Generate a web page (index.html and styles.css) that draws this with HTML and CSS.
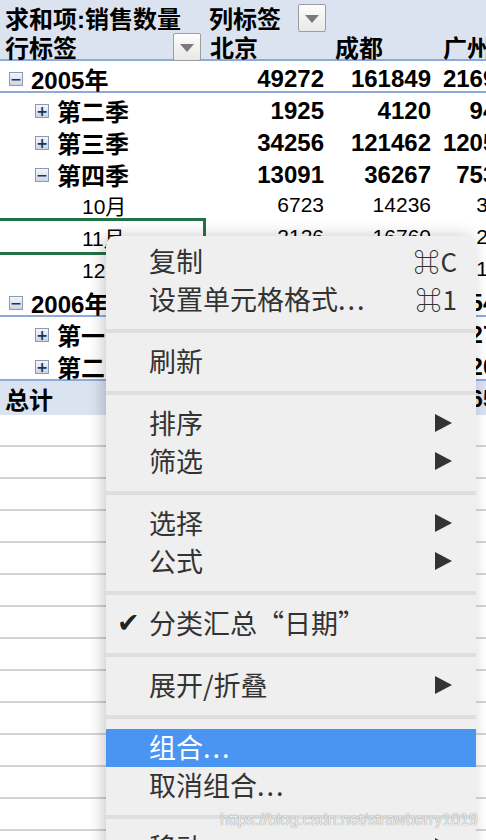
FILE: index.html
```html
<!DOCTYPE html>
<html lang="zh">
<head>
    <meta charset="utf-8">
    <title>数据透视表</title>
    <link rel="stylesheet" href="styles.css">
</head>
<body>
<div class="sheet">
    <div class="row head top">
        <div class="cell label">求和项:销售数量</div>
        <div class="cell pick">列标签 <span class="drop"></span></div>
    </div>
    <div class="row head line">
        <div class="cell pick">行标签 <span class="drop"></span></div>
        <div class="cell city">北京</div>
        <div class="cell city">成都</div>
        <div class="cell city">广州</div>
    </div>

    <div class="row bold line">
        <div class="cell lv1"><span class="tog">−</span>2005年</div>
        <div class="cell num">49272</div>
        <div class="cell num">161849</div>
        <div class="cell num">216935</div>
    </div>
    <div class="row bold">
        <div class="cell lv2"><span class="tog">+</span>第二季</div>
        <div class="cell num">1925</div>
        <div class="cell num">4120</div>
        <div class="cell num">9487</div>
    </div>
    <div class="row bold">
        <div class="cell lv2"><span class="tog">+</span>第三季</div>
        <div class="cell num">34256</div>
        <div class="cell num">121462</div>
        <div class="cell num">120563</div>
    </div>
    <div class="row bold">
        <div class="cell lv2"><span class="tog">−</span>第四季</div>
        <div class="cell num">13091</div>
        <div class="cell num">36267</div>
        <div class="cell num">75342</div>
    </div>
    <div class="row">
        <div class="cell lv3">10月</div>
        <div class="cell num">6723</div>
        <div class="cell num">14236</div>
        <div class="cell num">3120</div>
    </div>
    <div class="row">
        <div class="cell lv3 sel">11月</div>
        <div class="cell num">2126</div>
        <div class="cell num">16760</div>
        <div class="cell num">2841</div>
    </div>
    <div class="row">
        <div class="cell lv3">12月</div>
        <div class="cell num">4242</div>
        <div class="cell num">5271</div>
        <div class="cell num">1502</div>
    </div>
    <div class="row bold line">
        <div class="cell lv1"><span class="tog">−</span>2006年</div>
        <div class="cell num">31450</div>
        <div class="cell num">98311</div>
        <div class="cell num">5427</div>
    </div>
    <div class="row bold">
        <div class="cell lv2"><span class="tog">+</span>第一季</div>
        <div class="cell num">16204</div>
        <div class="cell num">50127</div>
        <div class="cell num">2715</div>
    </div>
    <div class="row bold line">
        <div class="cell lv2"><span class="tog">+</span>第二季</div>
        <div class="cell num">15246</div>
        <div class="cell num">48184</div>
        <div class="cell num">2012</div>
    </div>
    <div class="row head total">
        <div class="cell label">总计</div>
        <div class="cell num">80722</div>
        <div class="cell num">260160</div>
        <div class="cell num">6538</div>
    </div>

    <div class="row empty"></div>
    <div class="row empty"></div>
    <div class="row empty"></div>
    <div class="row empty"></div>
    <div class="row empty"></div>
    <div class="row empty"></div>
    <div class="row empty"></div>
    <div class="row empty"></div>
    <div class="row empty"></div>
    <div class="row empty"></div>
    <div class="row empty"></div>
    <div class="row empty"></div>
    <div class="row empty"></div>
</div>

<div class="menu">
    <div class="item">复制 <span class="key">⌘C</span></div>
    <div class="item">设置单元格格式<span class="dots">...</span> <span class="key">⌘1</span></div>
    <div class="sep"></div>
    <div class="item">刷新</div>
    <div class="sep"></div>
    <div class="item">排序 <span class="arrow"></span></div>
    <div class="item">筛选 <span class="arrow"></span></div>
    <div class="sep"></div>
    <div class="item">选择 <span class="arrow"></span></div>
    <div class="item">公式 <span class="arrow"></span></div>
    <div class="sep"></div>
    <div class="item"><span class="check">✔</span>分类汇总“日期”</div>
    <div class="sep"></div>
    <div class="item">展开/折叠 <span class="arrow"></span></div>
    <div class="sep"></div>
    <div class="item active">组合<span class="dots">...</span></div>
    <div class="item">取消组合<span class="dots">...</span></div>
    <div class="sep"></div>
    <div class="item">移动 <span class="arrow"></span></div>
</div>

<div class="mark">https://blog.csdn.net/strawberry1019</div>
</body>
</html>
```

FILE: styles.css
```css
html, body {
    margin: 0;
    height: 840px;
    overflow: hidden;
}

body {
    position: relative;
    background: white;
    font-family: "Liberation Sans", "Noto Sans CJK SC", sans-serif;
    color: black;
}

.sheet {
    width: 529px;
}

.row {
    display: grid;
    grid-template-columns: 205px 125px 107px 92px;
    height: 32px;
    box-sizing: border-box;
    align-items: center;
    font-size: 21px;
}

.row.top {
    height: 29px;
}

.head {
    background: #dbe3f1;
    font-weight: bold;
    font-size: 24px;
}

.bold {
    font-weight: bold;
    font-size: 24px;
}

.line {
    border-bottom: 2px solid #8eaadb;
}

.empty {
    border-bottom: 2px solid #d4d4d4;
}

.cell {
    white-space: nowrap;
    display: flex;
    align-items: center;
}

.label {
    padding-left: 5px;
}

.pick {
    justify-content: space-between;
    padding: 0 4px 0 5px;
}

.head .label + .pick {
    padding-left: 4px;
}

.city {
    padding-left: 5px;
}

.city:last-child {
    padding-left: 6px;
}

.num {
    justify-content: flex-end;
    padding-right: 6px;
}

.drop {
    width: 26px;
    height: 26px;
    border: 1px solid #9d9d9d;
    border-radius: 2px;
    background: linear-gradient(#fdfdfd, #e8e8e8);
    position: relative;
}

.drop::after {
    content: "";
    position: absolute;
    left: 6px;
    top: 10px;
    border-top: 8px solid #7a7a7a;
    border-left: 7px solid transparent;
    border-right: 7px solid transparent;
}

.tog {
    width: 12px;
    height: 12px;
    border: 1px solid #8b9bb7;
    background: linear-gradient(#f4f6fa, #cdd5e4);
    font: bold 14px/12px "DejaVu Sans", sans-serif;
    color: #1f3154;
    text-align: center;
    margin-right: 8px;
}

.lv1 {
    padding-left: 9px;
}

.lv2 {
    padding-left: 35px;
}

.lv3 {
    padding-left: 82px;
}

.sel {
    position: relative;
    height: 32px;
}

.sel::after {
    content: "";
    position: absolute;
    left: -4px;
    right: -1px;
    top: -3px;
    bottom: -2px;
    border: 3px solid #217346;
}

.total {
    height: 34px;
}

.menu {
    position: absolute;
    left: 106px;
    top: 236px;
    width: 370px;
    padding-top: 7px;
    background: #efefef;
    border-radius: 10px 10px 0 0;
    box-shadow: -3px 0 16px rgba(0, 0, 0, 0.22);
    font-family: "Noto Sans CJK SC", "DejaVu Sans", sans-serif;
    font-size: 27px;
    color: #333;
}

.item {
    height: 38px;
    box-sizing: border-box;
    padding: 0 18px 3px 43px;
    display: flex;
    align-items: center;
    position: relative;
}

.item.active {
    background: #4a94f2;
    color: white;
}

.dots {
    letter-spacing: 2px;
}

.key {
    margin-left: auto;
    font-size: 26px;
    letter-spacing: 1px;
}

.arrow {
    margin-left: auto;
    margin-right: 6px;
    border-left: 17px solid #333;
    border-top: 9px solid transparent;
    border-bottom: 9px solid transparent;
}

.check {
    position: absolute;
    left: 11px;
    font-family: "DejaVu Sans", sans-serif;
    font-size: 27px;
    color: #222;
}

.sep {
    height: 4px;
    margin: 10px 0;
    background: #dedede;
}

.mark {
    position: absolute;
    left: 220px;
    top: 811px;
    font-family: "Liberation Sans", sans-serif;
    font-size: 16px;
    color: #ececec;
    text-shadow: 0 0 1px rgba(0, 0, 0, 0.5);
}
```
